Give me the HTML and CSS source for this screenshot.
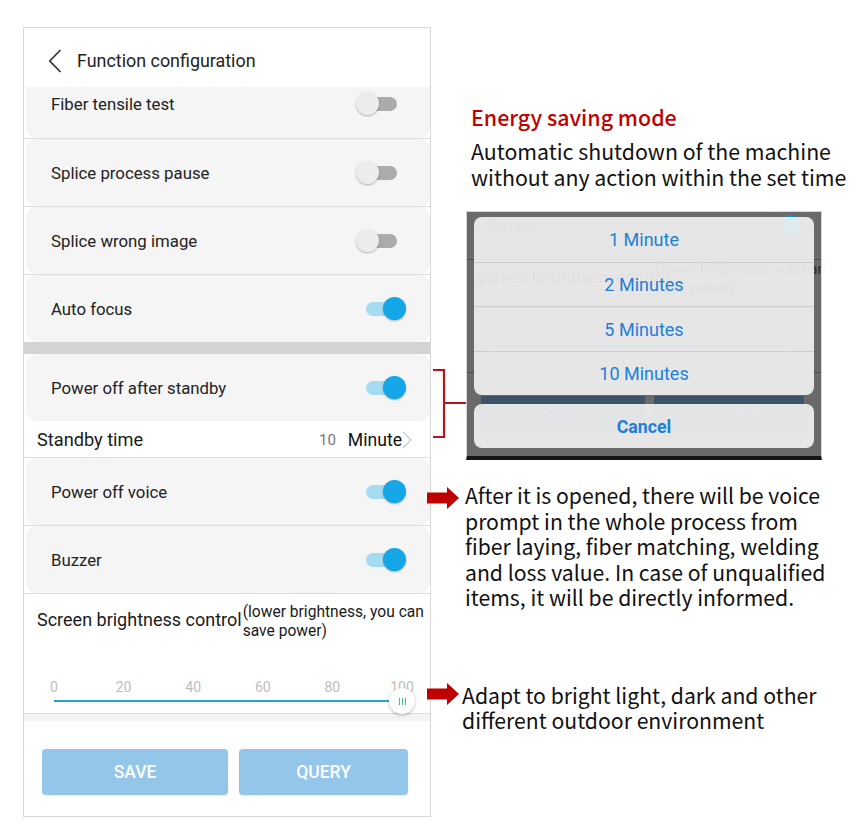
FILE: index.html
```html
<!DOCTYPE html>
<html>
<head>
<meta charset="utf-8">
<link rel="stylesheet" href="styles.css">
</head>
<body>
<div class="page">
  <div class="phone">
    <div class="header">
      <svg class="back" width="14" height="24" viewBox="0 0 14 24"><polyline points="12.5,1 1.8,12 12.5,23" fill="none" stroke="#333" stroke-width="1.7"/></svg>
      <span class="title">Function configuration</span>
    </div>
    <div class="card first"><span class="label">Fiber tensile test</span><span class="toggle off"><i class="track"></i><i class="thumb"></i></span></div>
    <div class="sep"></div>
    <div class="card"><span class="label">Splice process pause</span><span class="toggle off"><i class="track"></i><i class="thumb"></i></span></div>
    <div class="sep"></div>
    <div class="card"><span class="label">Splice wrong image</span><span class="toggle off"><i class="track"></i><i class="thumb"></i></span></div>
    <div class="sep"></div>
    <div class="card"><span class="label">Auto focus</span><span class="toggle on"><i class="track"></i><i class="thumb"></i></span></div>
    <div class="graybar"></div>
    <div class="card"><span class="label">Power off after standby</span><span class="toggle on"><i class="track"></i><i class="thumb"></i></span></div>
    <div class="standby">
      <span class="st-label">Standby time</span>
      <span class="st-value"><span class="num">10</span><span class="unit">Minute</span><svg class="chev" width="10" height="18" viewBox="0 0 10 18"><polyline points="1,1 9,9 1,17" fill="none" stroke="#c8c8c8" stroke-width="1.2"/></svg></span>
    </div>
    <div class="sep"></div>
    <div class="card"><span class="label">Power off voice</span><span class="toggle on"><i class="track"></i><i class="thumb"></i></span></div>
    <div class="sep"></div>
    <div class="card"><span class="label">Buzzer</span><span class="toggle on"><i class="track"></i><i class="thumb"></i></span></div>
    <div class="sep"></div>
    <div class="bright">
      <div class="bright-title"><span class="bt-main">Screen brightness control</span><span class="bt-sub">(lower brightness, you can<br>save power)</span></div>
      <div class="ticks"><span>0</span><span>20</span><span>40</span><span>60</span><span>80</span><span>100</span></div>
      <div class="slider"><div class="rail"></div><div class="knob"><i></i><i></i><i></i></div></div>
    </div>
    <div class="sep"></div>
    <div class="strip"></div>
    <div class="footer">
      <button class="btn save">SAVE</button>
      <button class="btn query">QUERY</button>
    </div>
  </div>

  <div class="side">
    <div class="heading">Energy saving mode</div>
    <div class="desc">Automatic shutdown of the machine<br>without any action within the set time</div>
    <div class="shot-row">
      <svg class="bracket" width="35" height="72" viewBox="0 0 35 72"><path d="M2,2 H13 V69 H2 M13,35 H35" fill="none" stroke="#b5161c" stroke-width="2.2"/></svg>
      <div class="shot">
        <div class="under">
          <span class="u-buzzer">Buzzer</span>
          <span class="u-dot"></span>
          <span class="u-line l1"></span>
          <span class="u-bright">Screen brightness control</span>
          <span class="u-sub">(lower brightness, you can<br>save power)</span>
          <span class="u-rail"></span>
          <span class="u-line l2"></span>
          <span class="u-btn b1">SAVE</span>
          <span class="u-btn b2">QUERY</span>
        </div>
        <div class="sheet">
          <div class="opt">1 Minute</div>
          <div class="opt">2 Minutes</div>
          <div class="opt">5 Minutes</div>
          <div class="opt">10 Minutes</div>
        </div>
        <div class="sheet cancel">Cancel</div>
      </div>
    </div>
    <div class="note n1">
      <svg class="arrow" width="32" height="22" viewBox="0 0 32 22"><polygon points="0,5.5 20,5.5 20,0 32,11 20,22 20,16.5 0,16.5" fill="#c00000"/></svg>
      <p>After it is opened, there will be voice<br>prompt in the whole process from<br>fiber laying, fiber matching, welding<br>and loss value. In case of unqualified<br>items, it will be directly informed.</p>
    </div>
    <div class="note n2">
      <svg class="arrow" width="32" height="22" viewBox="0 0 32 22"><polygon points="0,5.5 20,5.5 20,0 32,11 20,22 20,16.5 0,16.5" fill="#c00000"/></svg>
      <p>Adapt to bright light, dark and other<br>different outdoor environment</p>
    </div>
  </div>
</div>
</body>
</html>
```

FILE: styles.css
```css
* { box-sizing: border-box; }
body {
  margin: 0;
  background: #fff;
  font-family: Roboto, "Noto Sans", sans-serif;
  color: #222;
}
.page {
  display: flex;
  align-items: flex-start;
  padding: 27px 0 0 23px;
}

/* ---------- phone ---------- */
.phone {
  width: 408px;
  height: 790px;
  border: 1px solid #d8d8d8;
  display: flex;
  flex-direction: column;
  background: #fff;
  flex-shrink: 0;
  overflow: hidden;
}
.header {
  height: 59px;
  display: flex;
  align-items: center;
  padding: 6px 0 0 24px;
  flex-shrink: 0;
}
.back { display: block; }
.title {
  margin-left: 15px;
  font-size: 17.9px;
  color: #222;
}
.card {
  height: 67px;
  margin-left: 2px;
  background: #f5f5f5;
  border-radius: 10px;
  display: flex;
  align-items: center;
  justify-content: space-between;
  padding: 0 24px 0 25px;
  flex-shrink: 0;
}
.card.first {
  height: 51px;
  border-radius: 0 0 10px 10px;
  padding-bottom: 17px;
}
.label {
  font-size: 16.8px;
  color: #222;
}
.sep {
  height: 1px;
  background: #dcdcdc;
  flex-shrink: 0;
}
.graybar {
  height: 12px;
  background: #d3d3d3;
  flex-shrink: 0;
}
.toggle {
  position: relative;
  width: 50px;
  height: 24px;
  display: block;
}
.track {
  position: absolute;
  top: 5px;
  height: 14px;
  border-radius: 7px;
}
.thumb {
  position: absolute;
  top: 0;
  width: 23px;
  height: 23px;
  border-radius: 50%;
  box-shadow: 0 1px 2px rgba(0,0,0,.28);
}
.off .track { left: 1px; width: 40px; background: #ababab; }
.off .thumb { left: 0; background: #ececec; }
.on .track { left: 10px; width: 34px; background: #a6dcf2; }
.on .thumb { right: 0; background: #14a6e6; }

.standby {
  height: 36px;
  display: flex;
  align-items: center;
  justify-content: space-between;
  padding: 1px 18px 0 13px;
  flex-shrink: 0;
}
.st-label { font-size: 18.2px; color: #1a1a1a; }
.st-value { display: flex; align-items: center; }
.num { font-size: 15px; color: #777; margin-right: 12px; }
.unit { font-size: 17.6px; color: #111; }
.chev { display: block; margin-left: 0; }

.bright {
  height: 119px;
  padding: 9px 6px 0 13px;
  flex-shrink: 0;
}
.bright-title {
  display: flex;
  align-items: flex-start;
}
.bt-main {
  font-size: 18px;
  line-height: 20px;
  margin-top: 7px;
  color: #1a1a1a;
  white-space: nowrap;
}
.bt-sub {
  font-size: 15.6px;
  line-height: 19px;
  color: #1a1a1a;
  white-space: nowrap;
  margin-left: 1px;
}
.ticks {
  display: flex;
  justify-content: space-between;
  margin: 38px 22px 0 17px;
  height: 16px;
}
.ticks span {
  width: 0;
  display: flex;
  justify-content: center;
  font-size: 14px;
  line-height: 16px;
  color: #bdbdbd;
  white-space: nowrap;
}
.slider {
  position: relative;
  margin: 5px 22px 0 17px;
  height: 2px;
}
.rail {
  height: 2px;
  background: #27a3d8;
  margin-right: 6px;
}
.knob {
  position: absolute;
  right: -13px;
  top: -12px;
  width: 26px;
  height: 26px;
  border-radius: 50%;
  background: #fff;
  box-shadow: 0 1px 3px rgba(0,0,0,.3);
  display: flex;
  align-items: center;
  justify-content: center;
  gap: 2px;
}
.knob i {
  width: 1px;
  height: 7px;
  background: #3bbf8c;
}
.strip {
  height: 7px;
  background: #f3f3f3;
  flex-shrink: 0;
}
.footer {
  display: flex;
  gap: 11px;
  padding: 28px 0 0 18px;
  flex-shrink: 0;
}
.btn {
  height: 46px;
  border: none;
  border-radius: 4px;
  background: #94c6ea;
  color: #fff;
  font-family: Roboto, sans-serif;
  font-size: 17.5px;
  font-weight: 500;
  padding: 0;
  box-shadow: 0 1px 2px rgba(0,0,0,.08);
}
.save { width: 186px; }
.query { width: 169px; }

/* ---------- side annotations ---------- */
.side {
  display: flex;
  flex-direction: column;
  font-family: "Noto Sans CJK SC", "Noto Sans", sans-serif;
}
.heading {
  margin-top: 77px;
  padding-left: 40px;
  font-size: 21.4px;
  line-height: 26px;
  font-weight: 500;
  color: #c00000;
  white-space: nowrap;
}
.desc {
  margin-top: 8px;
  padding-left: 40px;
  font-size: 21.3px;
  line-height: 26px;
  color: #111;
  white-space: nowrap;
}
.shot-row {
  display: flex;
  align-items: flex-start;
  margin-top: 21px;
}
.bracket {
  display: block;
  margin-top: 157px;
  flex-shrink: 0;
}
.shot {
  position: relative;
  width: 356px;
  height: 249px;
  background: #6a6a6a;
  border: 1px solid #d8d8d8;
  border-bottom: 4px solid #141414;
  padding: 5px 7px 0 7px;
  display: flex;
  flex-direction: column;
  gap: 9px;
  overflow: hidden;
  font-family: Roboto, sans-serif;
}
.under {
  position: absolute;
  inset: 0;
  z-index: 0;
}
.under span { position: absolute; white-space: nowrap; color: #2b2b2b; }
.u-buzzer { left: 21px; top: 4px; font-size: 16px; line-height: 20px; }
.u-dot { left: 314px; top: 3px; width: 20px; height: 20px; border-radius: 50%; background: #138ec4; }
.u-line { left: 0; right: 0; height: 1px; background: #4a4a4a; }
.l1 { top: 47px; }
.l2 { top: 160px; }
.u-bright { left: 9px; top: 55px; font-size: 17px; line-height: 20px; }
.u-sub { left: 189px; top: 48px; font-size: 14.6px; line-height: 19px; }
.u-rail { left: 25px; top: 133px; width: 296px; height: 2px; background: #125a80; }
.u-btn { top: 184px; height: 36px; background: #3e5367; color: #5a6c7e !important; font-size: 16px; font-weight: 700; display: flex; align-items: center; justify-content: center; }
.b1 { left: 14px; width: 164px; }
.b2 { left: 187px; width: 150px; }

.sheet {
  position: relative;
  z-index: 1;
  background: rgba(244,244,244,0.9);
  border-radius: 8px;
  display: flex;
  flex-direction: column;
}
.opt {
  height: 44.5px;
  display: flex;
  align-items: center;
  justify-content: center;
  padding-top: 1px;
  font-size: 18px;
  color: #1e7fd9;
  border-top: 1px solid #cdcdcd;
}
.opt:first-child { border-top: none; }
.cancel {
  height: 44px;
  align-items: center;
  justify-content: center;
  padding-top: 1px;
  font-size: 17.7px;
  font-weight: 700;
  color: #1e7fd9;
}

.note {
  display: flex;
  align-items: flex-start;
}
.note p {
  margin: 0;
  font-size: 21.2px;
  line-height: 25.5px;
  color: #111;
  white-space: nowrap;
}
.arrow { display: block; flex-shrink: 0; margin-left: -4px; }
.n1 { margin-top: 22px; }
.n1 .arrow { margin-top: 5px; margin-right: 6px; }
.n2 { margin-top: 72px; }
.n2 .arrow { margin-top: 1px; margin-right: 3px; }
```
